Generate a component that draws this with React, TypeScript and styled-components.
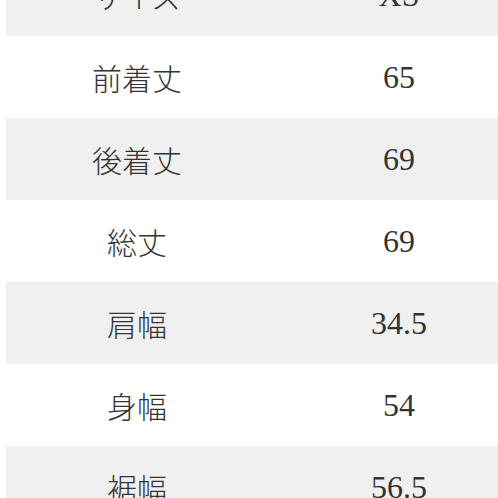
import styled, { createGlobalStyle } from 'styled-components';

const GlobalStyle = createGlobalStyle`
  html, body {
    margin: 0;
    padding: 0;
    background: #ffffff;
  }
  body {
    overflow: hidden;
  }
`;

const Page = styled.div`
  width: 498px;
  height: 498px;
  overflow: hidden;
  background: #ffffff;
`;

const Table = styled.div`
  width: 524px;
  margin-top: -46px;
  margin-left: 6px;
  display: flex;
  flex-direction: column;
`;

const Row = styled.div<{ $shaded: boolean }>`
  display: grid;
  grid-template-columns: 262px 262px;
  height: 82px;
  align-items: center;
  background: ${(p) => (p.$shaded ? '#f0f0f0' : '#ffffff')};
`;

const Label = styled.div`
  text-align: center;
  font-family: 'Noto Sans CJK JP', 'Noto Sans', sans-serif;
  font-size: 30px;
  font-weight: 300;
  color: #333333;
  line-height: 1;
`;

const Value = styled.div`
  text-align: center;
  font-family: 'Liberation Serif', 'Times New Roman', serif;
  font-size: 32px;
  color: #333333;
  line-height: 1;
`;

const rows = [
  { label: 'サイズ', value: 'XS' },
  { label: '前着丈', value: '65' },
  { label: '後着丈', value: '69' },
  { label: '総丈', value: '69' },
  { label: '肩幅', value: '34.5' },
  { label: '身幅', value: '54' },
  { label: '裾幅', value: '56.5' },
];

export default function App() {
  return (
    <Page>
      <GlobalStyle />
      <Table>
        {rows.map((row, i) => (
          <Row key={row.label} $shaded={i % 2 === 0}>
            <Label>{row.label}</Label>
            <Value>{row.value}</Value>
          </Row>
        ))}
      </Table>
    </Page>
  );
}
